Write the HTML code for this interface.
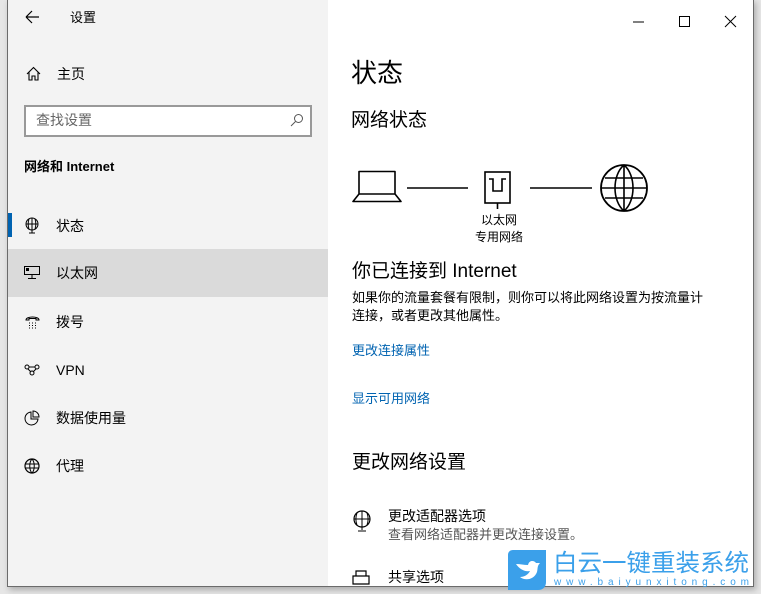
<!DOCTYPE html>
<html><head><meta charset="utf-8">
<style>
*{margin:0;padding:0;box-sizing:border-box}
body{width:761px;height:594px;overflow:hidden;background:#e6e6e6;font-family:"Liberation Sans","Noto Sans CJK SC",sans-serif;position:relative;color:#000}
.win{position:absolute;left:7px;top:-1px;width:747px;height:588px;border:1px solid #6b6b6b;background:#fff;box-shadow:2px 3px 6px rgba(0,0,0,.25)}
.side{position:absolute;left:8px;top:0;width:320px;height:586px;background:#f3f3f3}
.t{position:absolute;white-space:nowrap;line-height:1}
.item{position:absolute;left:8px;width:320px;height:48px}
svg{position:absolute;overflow:visible}
a{color:#0063b1;text-decoration:none}
</style></head><body>
<div class="win"></div>
<div class="side"></div>
<!-- sidebar -->
<svg style="left:25px;top:10px" width="16" height="14"><path d="M1 7H14M1 7L7 1M1 7L7 13" stroke="#000" stroke-width="1.2" fill="none"/></svg>
<div class="t" style="left:70px;top:11px;font-size:13px">设置</div>
<svg style="left:26px;top:66px" width="15" height="15"><path d="M1 8L7.5 1.5L14 8M3 6.5V14H6V10H9V14H12V6.5" stroke="#000" stroke-width="1.1" fill="none"/></svg>
<div class="t" style="left:57px;top:67px;font-size:14px">主页</div>
<div style="position:absolute;left:24px;top:105px;width:288px;height:32px;border:2px solid #999;background:#fff"></div>
<div class="t" style="left:36px;top:113px;font-size:14px;color:#666">查找设置</div>
<svg style="left:290px;top:113px" width="14" height="14"><circle cx="8.5" cy="5.5" r="4" stroke="#555" fill="none"/><path d="M5.5 8.5L1 13" stroke="#555"/></svg>
<div class="t" style="left:24px;top:160px;font-size:13px;font-weight:bold">网络和 Internet</div>

<div style="position:absolute;left:8px;top:213px;width:4px;height:24px;background:#0063b1"></div>
<svg style="left:25px;top:217px" width="15" height="17"><circle cx="7" cy="7" r="6" stroke="#000" fill="none"/><path d="M1 7H13M7 1V13M4 2C3 5 3 9 4 12M10 2C11 5 11 9 10 12M7 13V16M4 16H10" stroke="#000" fill="none"/></svg>
<div class="t" style="left:56px;top:219px;font-size:14px">状态</div>

<div class="item" style="top:249px;background:#dadada"></div>
<svg style="left:24px;top:266px" width="17" height="14"><rect x="0.5" y="0.5" width="15" height="8" stroke="#000" fill="none"/><rect x="2" y="2" width="3" height="3" fill="#000"/><path d="M8 9V12M4 12.5H12" stroke="#000"/></svg>
<div class="t" style="left:56px;top:266px;font-size:14px">以太网</div>

<svg style="left:25px;top:315px" width="15" height="14"><path d="M1 5C1 1 14 1 14 5L11 5L11 3.5H4V5Z" stroke="#000" fill="none" stroke-width="1"/><path d="M4 8H5M7 8H8M10 8H11M4 10.5H5M7 10.5H8M10 10.5H11M4 13H5M7 13H8M10 13H11" stroke="#000"/></svg>
<div class="t" style="left:56px;top:315px;font-size:14px">拨号</div>

<svg style="left:24px;top:364px" width="16" height="12"><circle cx="3" cy="3" r="2" stroke="#000" fill="none"/><circle cx="13" cy="3" r="2" stroke="#000" fill="none"/><circle cx="8" cy="9" r="2" stroke="#000" fill="none"/><path d="M5 3H11M4 5L7 8M12 5L9 8" stroke="#000"/></svg>
<div class="t" style="left:56px;top:363px;font-size:14px">VPN</div>

<svg style="left:24px;top:410px" width="16" height="16"><path d="M7 2A6.5 6.5 0 1 0 14 9H7Z" stroke="#000" fill="none"/><path d="M9 1A6 6 0 0 1 15 7H9Z" stroke="#000" fill="none"/></svg>
<div class="t" style="left:56px;top:411px;font-size:14px">数据使用量</div>

<svg style="left:24px;top:458px" width="16" height="16"><circle cx="8" cy="8" r="7" stroke="#000" fill="none" stroke-width="1.2"/><path d="M1 6H15M1 10H15M8 1C5 4 5 12 8 15M8 1C11 4 11 12 8 15" stroke="#000" fill="none"/></svg>
<div class="t" style="left:56px;top:459px;font-size:14px">代理</div>

<!-- title bar buttons -->
<svg style="left:633px;top:16px" width="110" height="12"><path d="M0 6H11" stroke="#000"/><rect x="46.5" y="0.5" width="10" height="10" stroke="#000" fill="none"/><path d="M92 0L103 11M103 0L92 11" stroke="#000"/></svg>

<!-- content -->
<div class="t" style="left:351px;top:60px;font-size:26px">状态</div>
<div class="t" style="left:351px;top:111px;font-size:19px">网络状态</div>
<svg style="left:352px;top:170px" width="300" height="45">
<path d="M7 1.5H43V24H7Z M7 24L1 31.5H49L43 24" stroke="#000" stroke-width="1.6" fill="none" stroke-linejoin="round"/>
<path d="M55 18H116M178 18H240" stroke="#000" stroke-width="1.6"/>
<rect x="133" y="2" width="25" height="31" stroke="#000" stroke-width="1.6" fill="none"/>
<path d="M137 9H141V21H150V9H154" stroke="#000" stroke-width="1.6" fill="none"/>
<path d="M145.5 33V39" stroke="#000" stroke-width="1.6"/>
<circle cx="272" cy="18" r="23" stroke="#000" stroke-width="1.8" fill="none"/>
<path d="M249 18H295M253 8H291M253 28H291M272 -5V41M272 -5C260 5 260 31 272 41M272 -5C284 5 284 31 272 41" stroke="#000" stroke-width="1.6" fill="none"/>
</svg>
<div class="t" style="left:481px;top:214px;font-size:12px">以太网</div>
<div class="t" style="left:475px;top:231px;font-size:12px">专用网络</div>

<div class="t" style="left:352px;top:262px;font-size:19px">你已连接到 Internet</div>
<div class="t" style="left:352px;top:291px;font-size:13px">如果你的流量套餐有限制，则你可以将此网络设置为按流量计</div>
<div class="t" style="left:352px;top:309px;font-size:13px">连接，或者更改其他属性。</div>
<div class="t" style="left:352px;top:344px;font-size:13px"><a>更改连接属性</a></div>
<div class="t" style="left:352px;top:392px;font-size:13px"><a>显示可用网络</a></div>
<div class="t" style="left:352px;top:453px;font-size:19px">更改网络设置</div>
<svg style="left:352px;top:510px" width="20" height="22"><circle cx="10" cy="9" r="8" stroke="#000" fill="none" stroke-width="1.2"/><path d="M2 9H18M10 1V17M5 3C3.5 7 3.5 11 5 15M15 3C16.5 7 16.5 11 15 15M10 17V20M6 21H14" stroke="#000" fill="none"/></svg>
<div class="t" style="left:388px;top:509px;font-size:14px">更改适配器选项</div>
<div class="t" style="left:388px;top:528px;font-size:13px;color:#555">查看网络适配器并更改连接设置。</div>
<svg style="left:352px;top:570px" width="18" height="16"><path d="M4 6V1H14V6M1 6H17V14H1Z" stroke="#000" fill="none" stroke-width="1.2"/></svg>
<div class="t" style="left:388px;top:570px;font-size:14px">共享选项</div>

<!-- watermark -->
<svg style="left:508px;top:550px" width="38" height="40"><path d="M5 0H38V32C38 37 35 40 30 40H0V5C0 2 2 0 5 0Z" fill="#3ba0ea"/><path d="M8 14C12 20 18 22 22 21C20 25 16 27 12 27C17 31 26 30 29 22C30 18 29 16 32 13L28 13C26 10 21 10 20 15C16 15 12 14 8 14Z" fill="#fff"/></svg>
<svg style="left:553px;top:546px" width="200" height="45">
<text x="0" y="25" font-size="24" fill="#3ba0ea" textLength="196" lengthAdjust="spacingAndGlyphs" font-family="Liberation Sans, Noto Sans CJK SC, sans-serif">白云一键重装系统</text>
<text x="1" y="39" font-size="10" fill="#3ba0ea" textLength="195" lengthAdjust="spacing" font-family="Liberation Sans, sans-serif">www.baiyunxitong.com</text>
</svg>
</body></html>
